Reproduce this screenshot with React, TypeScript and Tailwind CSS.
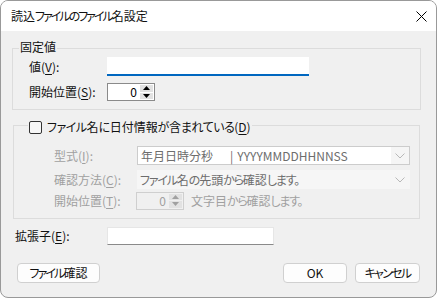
import React from "react";

const isKana = (c: string) => /[\u3000-\u30ff]/.test(c);

function Jp({ text, k }: { text: string; k: string }) {
  const runs: { s: string; kana: boolean }[] = [];
  for (const c of text) {
    const kana = isKana(c);
    const last = runs[runs.length - 1];
    if (last && last.kana === kana) last.s += c;
    else runs.push({ s: c, kana });
  }
  return (
    <>
      {runs.map((r, i) =>
        r.kana ? (
          <span key={i} className={k}>
            {r.s}
          </span>
        ) : (
          <React.Fragment key={i}>{r.s}</React.Fragment>
        )
      )}
    </>
  );
}

const Spinner = ({ disabled }: { disabled?: boolean }) => (
  <div
    className={`flex items-stretch w-[48px] h-[18px] border ${
      disabled ? "border-[#cfcfcf] bg-[#f0f0f0]" : "border-[#8a8a8a] bg-white"
    }`}
  >
    <div
      className={`flex-1 flex items-center justify-end pr-[3px] leading-[14px] ${
        disabled ? "text-[#a0a0a0]" : "text-black"
      }`}
    >
      0
    </div>
    <div className="w-[13px] flex flex-col gap-[1px] py-[1px] mr-[1px]">
      <div className="flex-1 bg-[#e2e2e2] flex items-center justify-center">
        <svg width="7" height="4" viewBox="0 0 7 4">
          <polygon points="3.5,0 7,4 0,4" fill={disabled ? "#a0a0a0" : "#000"} />
        </svg>
      </div>
      <div className="flex-1 bg-[#e2e2e2] flex items-center justify-center">
        <svg width="7" height="4" viewBox="0 0 7 4">
          <polygon points="0,0 7,0 3.5,4" fill={disabled ? "#a0a0a0" : "#000"} />
        </svg>
      </div>
    </div>
  </div>
);

const Chevron = () => (
  <svg width="10" height="6" viewBox="0 0 10 6">
    <polyline points="0.5,0.5 5,5 9.5,0.5" fill="none" stroke="#b8b8b8" strokeWidth="1" />
  </svg>
);

export default function App() {
  return (
    <div className="w-[437px] h-[298px] bg-white font-['Noto_Sans_CJK_JP',sans-serif] [font-feature-settings:'palt'_1] text-[12px] leading-[16px] text-[#111111]">
      <div className="w-[437px] h-[298px] border border-[#999999] rounded-[8px] overflow-hidden bg-[#f0f0f0] flex flex-col">
        {/* Title bar */}
        <div className="h-[30px] bg-white flex items-center justify-between pl-[10px] pr-[9px] shrink-0">
          <span className="whitespace-nowrap">
            <Jp text="読込ファイルのファイル名設定" k="tracking-[-2px]" />
          </span>
          <svg width="11" height="11" viewBox="0 0 11 11">
            <path d="M0.5 0.5 L10.5 10.5 M10.5 0.5 L0.5 10.5" stroke="#000" strokeWidth="1" />
          </svg>
        </div>

        {/* Body */}
        <div className="flex flex-col pl-[11px]">
          {/* Group 1 */}
          <div className="relative mt-[17px] w-[409px] h-[62px] border border-[#dcdcdc] pt-[8px] pl-[16px] flex flex-col gap-[7px]">
            <span className="absolute left-[6px] -top-[10px] px-[1px] bg-[#f0f0f0] leading-[16px]">固定値</span>
            <div className="flex items-center h-[19px]">
              <span className="w-[78px]">
                値(<u className="underline-offset-2">V</u>):
              </span>
              <div className="w-[202px] h-[19px] bg-white border-b-2 border-[#0067c0]" />
            </div>
            <div className="flex items-center h-[18px]">
              <span className="w-[78px]">
                開始位置(<u className="underline-offset-2">S</u>):
              </span>
              <Spinner />
            </div>
          </div>

          {/* Group 2 */}
          <div className="relative mt-[15px] ml-[1px] w-[407px] h-[94px] border border-[#dcdcdc] pt-[20px] pl-[40px] flex flex-col text-[#a0a0a0]">
            <div className="absolute left-[14px] -top-[7px] px-[1px] bg-[#f0f0f0] flex items-center gap-[5px] text-[#111111] leading-[16px]">
              <div className="w-[13px] h-[13px] border border-[#333333] rounded-[2px] bg-[#f7f7f7]" />
              <span className="whitespace-nowrap">
                <Jp text="ファイル名に日付情報が含まれている" k="tracking-[-0.5px]" />(<u className="underline-offset-2">D</u>)
              </span>
            </div>
            <div className="flex items-center h-[19px]">
              <span className="w-[83px]">
                型式(<u className="underline-offset-2">I</u>):
              </span>
              <div className="w-[273px] h-[19px] border border-[#cccccc] flex items-stretch">
                <div className="w-[253px] bg-white flex items-center pl-[3px] text-[#6d6d6d]">
                  <span>年月日時分秒</span>
                  <span className="ml-[17px] mr-[4px]">|</span>
                  <span>YYYYMMDDHHNNSS</span>
                </div>
                <div className="flex-1 bg-[#f5f5f5] flex items-center justify-center">
                  <Chevron />
                </div>
              </div>
            </div>
            <div className="flex items-center h-[19px] mt-[5px]">
              <span className="w-[83px]">
                確認方法(<u className="underline-offset-2">C</u>):
              </span>
              <div className="w-[273px] h-[19px] bg-[#f6f6f6] flex items-center justify-between pl-[3px] pr-[5px] text-[#6d6d6d]">
                <span className="whitespace-nowrap">
                  <Jp text="ファイル名の先頭から確認します。" k="tracking-[-1.2px]" />
                </span>
                <Chevron />
              </div>
            </div>
            <div className="flex items-center h-[19px] mt-[2px]">
              <span className="w-[82px]">
                開始位置(<u className="underline-offset-2">T</u>):
              </span>
              <Spinner disabled />
              <span className="ml-[7px] whitespace-nowrap">
                <Jp text="文字目から確認します。" k="tracking-[-1.3px]" />
              </span>
            </div>
          </div>

          {/* Extension */}
          <div className="flex items-center mt-[8px] ml-[3px] h-[18px]">
            <span className="w-[92px]">
              拡張子(<u className="underline-offset-2">E</u>):
            </span>
            <div className="w-[167px] h-[18px] bg-white border border-[#e6e6e6] border-b-[#8a8a8a]" />
          </div>

          {/* Buttons */}
          <div className="flex justify-between mt-[18px] ml-[5px] w-[403px]">
            <button className="w-[83px] h-[20px] bg-[#fdfdfd] border border-[#d0d0d0] rounded-[4px] flex items-center justify-center leading-[16px] whitespace-nowrap">
              <Jp text="ファイル確認" k="tracking-[-1.9px]" />
            </button>
            <div className="flex gap-[8px]">
              <button className="w-[64px] h-[20px] bg-[#fdfdfd] border border-[#d0d0d0] rounded-[4px] flex items-center justify-center leading-[16px]">
                OK
              </button>
              <button className="w-[65px] h-[20px] bg-[#fdfdfd] border border-[#d0d0d0] rounded-[4px] flex items-center justify-center leading-[16px] whitespace-nowrap">
                <Jp text="キャンセル" k="tracking-[-1.7px]" />
              </button>
            </div>
          </div>
        </div>
      </div>
    </div>
  );
}
